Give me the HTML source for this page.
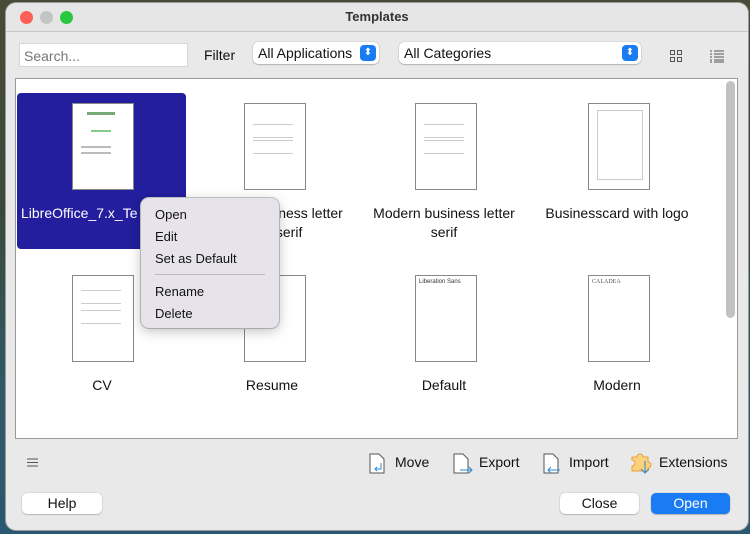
<!DOCTYPE html>
<html><head><style>
*{margin:0;padding:0;box-sizing:border-box}
body{width:750px;height:534px;overflow:hidden;background:linear-gradient(180deg,#4a4a38 0%,#3a4a3a 40%,#2f5a6a 75%,#2a5870 100%);font-family:"Liberation Sans",sans-serif;position:relative;color:#111}
.win{position:absolute;left:6px;top:3px;width:742px;height:527px;background:#e9e9e9;border-radius:10px;overflow:hidden;box-shadow:0 0 0 1px #9a9a9a}
.tb{height:29px;border-bottom:1px solid #c8c8c8;background:#e6e6e6;text-align:center;font-size:13px;font-weight:bold;line-height:28px;color:#333}
.dot{position:absolute;top:8px;width:13px;height:13px;border-radius:50%}
.abs{position:absolute}
.search{left:13px;top:40px;width:169px;height:24px;background:#fff;border:1px solid #d6d6d6;font-size:14px;color:#777;padding:4px 4px}
.sel{height:22px;background:#fff;border-radius:5px;box-shadow:0 0 1px #888,0 1px 1px #bbb;font-size:14px;line-height:22px;padding-left:5px}
.arr{position:absolute;right:3px;top:3px;width:16px;height:16px;background:#1a7cf5;border-radius:4px;color:#fff;font-size:10px;text-align:center;line-height:16px}
.list{left:9px;top:75px;width:723px;height:361px;background:#fff;border:1px solid #9b9b9b}
.page{position:absolute;width:62px;height:87px;background:#fff;border:1px solid #888}
.tx{position:absolute;left:8px;height:14px;width:40px;border-top:1px solid #ccc;border-bottom:1px solid #ccc}
.lbl{position:absolute;width:172px;text-align:center;font-size:14px;line-height:19px}
.btn{height:21px;background:#fff;border-radius:5px;box-shadow:0 0 1px #999,0 1px 1px #bbb;font-size:14px;text-align:center;line-height:21px}
.tool{font-size:14px;top:451px}
.ln{position:absolute;height:1px;background:#bbb}
</style></head><body>
<div class="win">
<div class="tb">Templates</div>
<div class="dot" style="left:14px;background:#fe5f57"></div>
<div class="dot" style="left:34px;background:#c4c4c4"></div>
<div class="dot" style="left:54px;background:#29c840"></div>
<div class="abs search">Search...</div>
<div class="abs" style="left:198px;top:44px;font-size:14px">Filter</div>
<div class="abs sel" style="left:247px;top:39px;width:126px">All Applications<div class="arr">⬍</div></div>
<div class="abs sel" style="left:393px;top:39px;width:242px">All Categories<div class="arr">⬍</div></div>
<svg class="abs" style="left:663px;top:46px" width="14" height="14"><g fill="none" stroke="#555"><rect x="1.5" y="1.5" width="4" height="4"/><rect x="8.5" y="1.5" width="4" height="4"/><rect x="1.5" y="8.5" width="4" height="4"/><rect x="8.5" y="8.5" width="4" height="4"/></g></svg>
<svg class="abs" style="left:703px;top:46px" width="16" height="14"><g stroke="#555"><path d="M1 2h2M5 2h10M1 5h2M5 5h10M1 8h2M5 8h10M1 11h2M5 11h10M1 13h2M5 13h10"/></g></svg>
<div class="abs list">
 <div class="abs" style="left:1px;top:14px;width:169px;height:156px;background:#221e9e;border-radius:4px"></div>
 <div class="page" style="left:56px;top:24px"><div style="position:absolute;left:14px;top:8px;width:28px;height:3px;background:#7a7"></div><div style="position:absolute;left:18px;top:26px;width:20px;height:2px;background:#8c8"></div><div style="position:absolute;left:8px;top:42px;width:30px;height:8px;border-top:2px solid #bbb;border-bottom:2px solid #bbb"></div></div>
 <div class="lbl" style="left:0;top:125px;color:#fff;text-align:left;padding-left:5px">LibreOffice_7.x_Te</div>
 <div class="page" style="left:228px;top:24px"><div class="tx" style="top:20px"></div><div class="tx" style="top:36px"></div></div>
 <div class="lbl" style="left:170px;top:125px">Modern business letter<br>sans-serif</div>
 <div class="page" style="left:399px;top:24px"><div class="tx" style="top:20px"></div><div class="tx" style="top:36px"></div></div>
 <div class="lbl" style="left:342px;top:125px">Modern business letter<br>serif</div>
 <div class="page" style="left:572px;top:24px"><div class="tx" style="top:6px;height:70px;border:1px solid #ccc;width:46px"></div></div>
 <div class="lbl" style="left:515px;top:125px">Businesscard with logo</div>
 <div class="page" style="left:56px;top:196px"><div class="tx" style="top:14px"></div><div class="tx" style="top:34px"></div></div>
 <div class="lbl" style="left:0;top:297px">CV</div>
 <div class="page" style="left:228px;top:196px"></div>
 <div class="lbl" style="left:170px;top:297px">Resume</div>
 <div class="page" style="left:399px;top:196px;font-size:6px;padding:3px;color:#333">Liberation Sans</div>
 <div class="lbl" style="left:342px;top:297px">Default</div>
 <div class="page" style="left:572px;top:196px;font-size:6px;padding:3px;color:#555;font-family:'Liberation Serif',serif">CALADEA</div>
 <div class="lbl" style="left:515px;top:297px">Modern</div>
 <div class="abs" style="left:710px;top:2px;width:9px;height:237px;background:#c2c2c2;border-radius:5px"></div>
</div>
<svg class="abs" style="left:21px;top:455px" width="12" height="9"><path d="M0 1h11M0 4.5h11M0 8h11" stroke="#555"/></svg>
<svg class="abs" style="left:362px;top:450px" width="20" height="22"><path d="M2 1h9l5 5v14H2z" fill="#fff" stroke="#555"/><path d="M13 10v6h-6m2-2l-2 2 2 2" stroke="#2a8ad6" fill="none"/></svg>
<div class="abs tool" style="left:389px">Move</div>
<svg class="abs" style="left:446px;top:450px" width="22" height="22"><path d="M2 1h9l5 5v14H2z" fill="#fff" stroke="#555"/><path d="M8 17h12m-3-3 3 3-3 3" stroke="#2a8ad6" fill="none"/></svg>
<div class="abs tool" style="left:473px">Export</div>
<svg class="abs" style="left:536px;top:450px" width="20" height="22"><path d="M2 1h9l5 5v14H2z" fill="#fff" stroke="#555"/><path d="M18 17H6m3-3-3 3 3 3" stroke="#2a8ad6" fill="none"/></svg>
<div class="abs tool" style="left:563px">Import</div>
<svg class="abs" style="left:624px;top:448px" width="22" height="24"><path d="M2 6h5a3 3 0 1 1 6 0h5v5a3 3 0 1 1 0 6v3H2v-5a3 3 0 1 0 0-6z" fill="#fbd27a" stroke="#e8a040"/><path d="M15 10v12m-4-4 4 4 4-4" stroke="#2a8ad6" fill="none"/></svg>
<div class="abs tool" style="left:653px">Extensions</div>
<div class="abs btn" style="left:16px;top:490px;width:80px">Help</div>
<div class="abs btn" style="left:554px;top:490px;width:79px">Close</div>
<div class="abs btn" style="left:645px;top:490px;width:79px;background:#1a7cf5;color:#fff">Open</div>
</div>
<div class="abs" style="left:141px;top:198px;width:138px;height:130px;background:#e6e4ea;border-radius:8px;box-shadow:0 3px 12px rgba(0,0,0,.25),0 0 0 1px #ccc;font-size:13px">
 <div class="abs" style="left:14px;top:9px">Open</div>
 <div class="abs" style="left:14px;top:31px">Edit</div>
 <div class="abs" style="left:14px;top:53px">Set as Default</div>
 <div class="ln" style="left:14px;top:76px;width:110px"></div>
 <div class="abs" style="left:14px;top:86px">Rename</div>
 <div class="abs" style="left:14px;top:108px">Delete</div>
</div>
</body></html>
